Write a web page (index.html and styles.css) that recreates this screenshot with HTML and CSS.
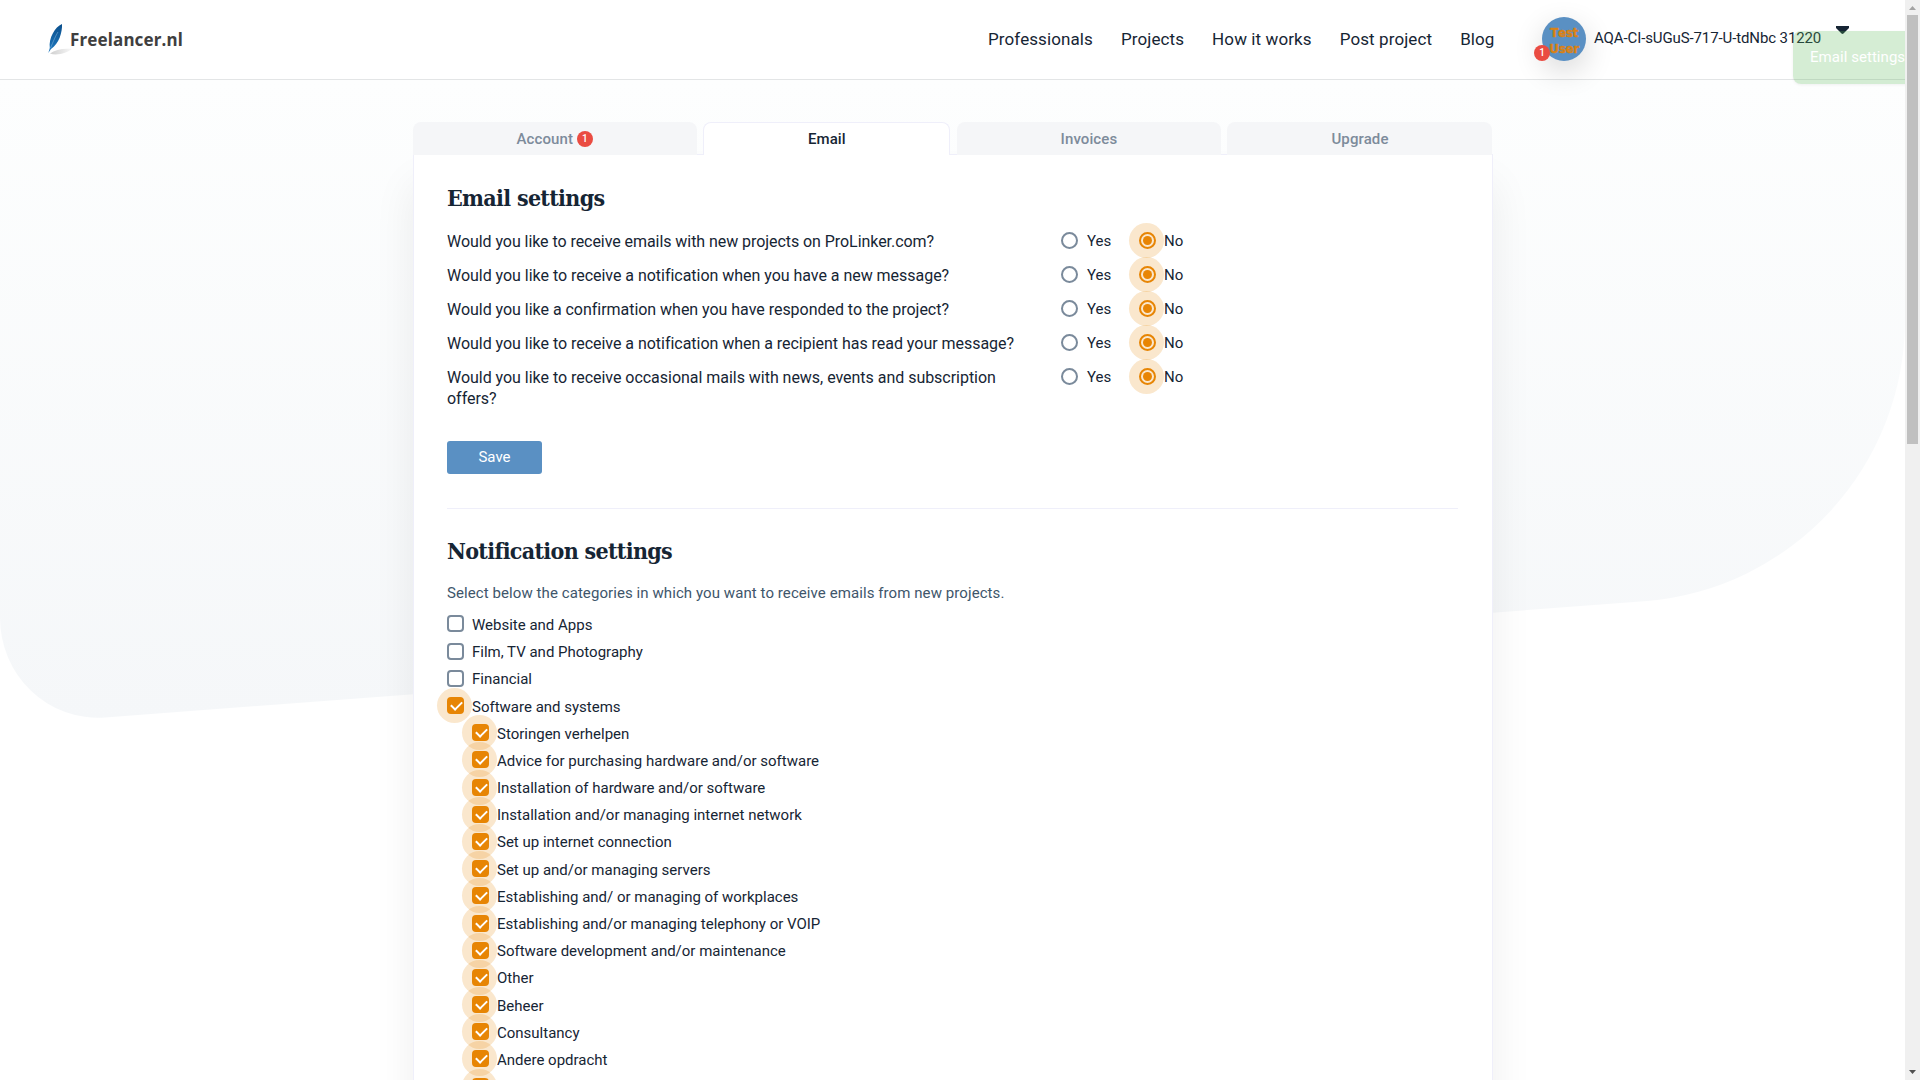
FILE: index.html
```html
<!DOCTYPE html>
<html lang="en">
<head>
<meta charset="utf-8">
<title>Email settings - Freelancer.nl</title>
<link rel="stylesheet" href="styles.css">
</head>
<body>
<div class="window">
  <div class="page">
    <svg class="backdrop" viewBox="0 0 1905 1080" width="1905" height="1080" aria-hidden="true">
      <defs>
        <linearGradient id="fade" x1="0" y1="0" x2="0" y2="1">
          <stop offset="0" stop-color="#fdfefe"/>
          <stop offset="1" stop-color="#f5f7f9"/>
        </linearGradient>
      </defs>
      <path fill="url(#fade)" d="M0 80H1905V320A282 282 0 0 1 1647 601L105 717.500A98 100 0 0 1 0 617Z"/>
    </svg>
    <header class="header">
      <a class="logo">
        <svg width="26" height="34" viewBox="0 0 26 34" aria-hidden="true">
          <defs>
            <linearGradient id="quill" x1="0" y1="0" x2="0" y2="1"><stop offset="0" stop-color="#0a4f8c"/><stop offset="1" stop-color="#1f7ac0"/></linearGradient>
            <linearGradient id="shade" x1="0" y1="0" x2="1" y2="0"><stop offset="0" stop-color="#cfcfcf"/><stop offset="1" stop-color="#f8f8f8"/></linearGradient>
          </defs>
          <path fill="url(#shade)" d="M2 30.500C7 27 15 25 24 26C19 30 9 33 2 30.500Z"/>
          <path fill="url(#quill)" d="M14 1C7 4 .500 15 1.800 25L.300 30L3 26C11 21 14.500 9 14 1Z"/>
          <path fill="none" stroke="#8fbbe0" stroke-width=".5" d="M2.500 25C5 19 8 12 10 9"/>
        </svg>
        <span class="logo-text">Freelancer.nl</span>
      </a>
      <nav class="nav">
        <a>Professionals</a><a>Projects</a><a>How it works</a><a>Post project</a><a>Blog</a>
      </nav>
      <div class="user">
        <div class="avatar"><span>Test</span><span>User</span><b class="badge avatar-badge">1</b></div>
        <span class="user-name">AQA-CI-sUGuS-717-U-tdNbc 31220</span>
        <svg class="caret" width="13" height="8" viewBox="0 0 13 8" aria-hidden="true"><path d="M0 0H13V2L7.500 7.500Q6.500 8.400 5.500 7.500L0 2Z" fill="#162534"/></svg>
      </div>
    </header>
    <main class="main">
      <div class="tabs">
        <a class="tab">Account <b class="badge">1</b></a>
        <a class="tab tab-active">Email</a>
        <a class="tab">Invoices</a>
        <a class="tab">Upgrade</a>
      </div>
      <div class="card">
        <section class="email">
          <h2 class="title title-email">Email settings</h2>
          <div class="questions">
            <div class="question"><p>Would you like to receive emails with new projects on ProLinker.com?</p><label class="opt"><i class="radio"></i>Yes</label><label class="opt"><i class="radio on"></i>No</label></div>
            <div class="question"><p>Would you like to receive a notification when you have a new message?</p><label class="opt"><i class="radio"></i>Yes</label><label class="opt"><i class="radio on"></i>No</label></div>
            <div class="question"><p>Would you like a confirmation when you have responded to the project?</p><label class="opt"><i class="radio"></i>Yes</label><label class="opt"><i class="radio on"></i>No</label></div>
            <div class="question"><p>Would you like to receive a notification when a recipient has read your message?</p><label class="opt"><i class="radio"></i>Yes</label><label class="opt"><i class="radio on"></i>No</label></div>
            <div class="question"><p>Would you like to receive occasional mails with news, events and subscription offers?</p><label class="opt"><i class="radio"></i>Yes</label><label class="opt"><i class="radio on"></i>No</label></div>
          </div>
          <button class="save">Save</button>
        </section>
        <section class="notify">
          <h2 class="title title-notify">Notification settings</h2>
          <p class="hint">Select below the categories in which you want to receive emails from new projects.</p>
          <div class="list">
            <label class="item"><i class="check"></i><span>Website and Apps</span></label>
            <label class="item"><i class="check"></i><span>Film, TV and Photography</span></label>
            <label class="item"><i class="check"></i><span>Financial</span></label>
            <label class="item"><i class="check on"></i><span>Software and systems</span></label>
            <div class="list sublist">
              <label class="item"><i class="check on"></i><span>Storingen verhelpen</span></label>
              <label class="item"><i class="check on"></i><span>Advice for purchasing hardware and/or software</span></label>
              <label class="item"><i class="check on"></i><span>Installation of hardware and/or software</span></label>
              <label class="item"><i class="check on"></i><span>Installation and/or managing internet network</span></label>
              <label class="item"><i class="check on"></i><span>Set up internet connection</span></label>
              <label class="item"><i class="check on"></i><span>Set up and/or managing servers</span></label>
              <label class="item"><i class="check on"></i><span>Establishing and/ or managing of workplaces</span></label>
              <label class="item"><i class="check on"></i><span>Establishing and/or managing telephony or VOIP</span></label>
              <label class="item"><i class="check on"></i><span>Software development and/or maintenance</span></label>
              <label class="item"><i class="check on"></i><span>Other</span></label>
              <label class="item"><i class="check on"></i><span>Beheer</span></label>
              <label class="item"><i class="check on"></i><span>Consultancy</span></label>
              <label class="item"><i class="check on"></i><span>Andere opdracht</span></label>
              <label class="item"><i class="check on"></i></label>
            </div>
          </div>
        </section>
      </div>
    </main>
    <div class="toast">Email settings</div>
  </div>
  <div class="scrollbar"><i class="arrow arrow-up"></i><i class="thumb"></i><i class="arrow arrow-down"></i></div>
</div>
</body>
</html>
```
FILE: styles.css
```css
* { box-sizing: border-box; }

body {
  margin: 0;
  background: #fff;
  color: #162534;
  font-family: Roboto, "Liberation Sans", sans-serif;
  font-size: 15px;
  overflow: hidden;
}

h2, p { margin: 0; }

.window {
  display: grid;
  grid-template-columns: 1fr 15px;
  height: 1080px;
  overflow: hidden;
}

.page {
  position: relative;
  overflow: hidden;
}

.backdrop {
  position: absolute;
  inset: 0;
  z-index: -1;
}

/* Header */
.header {
  display: flex;
  align-items: flex-start;
  height: 80px;
  padding-left: 48px;
  background: #fff;
  border-bottom: 1px solid #e3e5e6;
}

.logo {
  display: flex;
  width: 940px;
  padding-top: 23px;
}

.logo-text {
  margin-left: -4px;
  padding-top: 6px;
  color: #3f3f3f;
  font: 700 17px/22px "Noto Sans", "Open Sans", sans-serif;
  font-kerning: none;
  letter-spacing: .15px;
}

.nav {
  display: flex;
  gap: 28px;
  width: 554px;
  padding-top: 29px;
  font-size: 17px;
  line-height: 20px;
  letter-spacing: .1px;
  white-space: nowrap;
}

.user {
  display: flex;
  align-items: flex-start;
  padding-top: 17px;
  white-space: nowrap;
}

.avatar {
  position: relative;
  display: flex;
  flex-direction: column;
  align-items: center;
  width: 44px;
  height: 44px;
  padding-top: 8px;
  border-radius: 50%;
  background: #5a90c3;
  box-shadow: 0 10px 30px rgba(0, 0, 0, .16);
  color: #d98215;
  font: 700 12px/16px "DejaVu Sans", sans-serif;
  font-kerning: none;
  letter-spacing: -.4px;
  -webkit-text-stroke: .4px #d98215;
}

.badge {
  display: inline-flex;
  align-items: center;
  justify-content: center;
  width: 16px;
  height: 16px;
  border-radius: 50%;
  background: #ea4c42;
  color: #fff;
  font: 500 10px/16px Roboto, sans-serif;
  -webkit-text-stroke: 0;
}

.avatar-badge {
  position: absolute;
  left: -8px;
  top: 28px;
}

.user-name {
  margin-left: 8px;
  padding-top: 12px;
  line-height: 18px;
  letter-spacing: -.11px;
}

.caret {
  margin: 9px 0 0 15px;
}

/* Tabs and card */
.main {
  width: 1080px;
  margin: 42px auto 0;
}

.tabs {
  position: relative;
  display: grid;
  grid-template-columns: 284.500px 247px 264.500px 265px;
  column-gap: 6.330px;
  height: 33px;
}

.tab {
  display: flex;
  align-items: center;
  justify-content: center;
  gap: 4px;
  padding-top: 1px;
  border-radius: 8px 8px 0 0;
  background: #f5f6f8;
  color: #7d8b9b;
  font-weight: 500;
  letter-spacing: .1px;
}

.tab-active {
  border: 1px solid #efeffa;
  border-bottom: 0;
  padding-top: 0;
  background: #fff;
  color: #162534;
}

.card {
  height: 1200px;
  margin-top: -1px;
  padding: 0 33.500px;
  border: 1px solid #efeffa;
  background: #fff;
  box-shadow: 0 30px 40px rgba(0, 0, 0, .07);
}

.title {
  font: 700 23px/32px "DejaVu Serif Condensed", "DejaVu Serif", serif;
  font-stretch: condensed;
  letter-spacing: -.68px;
  white-space: nowrap;
}

.email {
  height: 354px;
  padding-top: 27px;
  border-bottom: 1px solid #efeffa;
}

.questions {
  display: flex;
  flex-direction: column;
  gap: 13px;
  padding-top: 17px;
}

.question {
  display: grid;
  grid-template-columns: 614px 78px 100px;
  font-size: 16px;
  line-height: 21px;
}

.question p {
  width: 580px;
  letter-spacing: -.03px;
}

.question:first-child p { letter-spacing: -.06px; }

.opt {
  display: flex;
  align-items: flex-start;
  gap: 9px;
  height: 21px;
  padding-top: 1px;
  font-size: 15px;
  line-height: 19px;
}

.opt + .opt { gap: 8px; }

.radio,
.check {
  position: relative;
  flex: none;
  width: 17px;
  height: 17px;
  border: 2px solid #7a8a9b;
  border-radius: 50%;
}

.check { border-radius: 4px; }

.radio.on,
.check.on { border-color: #e88504; }

.check.on { background: #e88504; }

.radio.on::after {
  content: "";
  position: absolute;
  inset: 2px;
  border-radius: 50%;
  background: #e88504;
}

.radio.on::before,
.check.on::before {
  content: "";
  position: absolute;
  left: -12px;
  top: -11px;
  width: 35px;
  height: 35px;
  border-radius: 50%;
  background: rgba(232, 133, 4, .2);
  z-index: 0;
}

.check.on::after {
  content: "";
  position: absolute;
  left: 2px;
  top: 2px;
  width: 9px;
  height: 5px;
  border: solid #fff;
  border-width: 0 0 2px 2px;
  transform: rotate(-45deg);
}

.save {
  display: block;
  width: 95px;
  height: 33px;
  margin-top: 32px;
  padding: 0 0 2px;
  border: 0;
  border-radius: 3px;
  background: #5a90c3;
  color: #fff;
  font: 400 15px/20px Roboto, sans-serif;
}

.notify { padding-top: 26px; }

.hint {
  padding-top: 16px;
  color: #40566b;
  line-height: 20px;
  letter-spacing: .08px;
}

.list { padding-top: 7.400px; }

.sublist { padding: 0 0 0 25px; }

.item {
  display: flex;
  align-items: center;
  gap: 8px;
  height: 27.200px;
}

.item span {
  position: relative;
  padding-top: 2px;
}

/* Overlay notice sliding in from the right */
.toast {
  position: absolute;
  left: 1793px;
  top: 31px;
  width: 200px;
  height: 53px;
  padding: 16px 17px;
  border-radius: 8px;
  background: rgba(86, 184, 84, .25);
  box-shadow: 0 1px 3px rgba(0, 0, 0, .06);
  color: #fff;
  line-height: 20px;
  letter-spacing: .05px;
}

/* Window scrollbar */
.scrollbar {
  display: flex;
  flex-direction: column;
  align-items: center;
  background: #f0f0f0;
}

.thumb {
  width: 11px;
  height: 429px;
  margin-top: 5px;
  background: #c0c0c0;
}

.arrow {
  width: 7px;
  height: 4px;
  background: #a3a3a3;
  clip-path: polygon(50% 0, 100% 100%, 0 100%);
}

.arrow-up { margin-top: 6px; }

.arrow-down {
  margin: auto 0 6px;
  background: #505050;
  clip-path: polygon(0 0, 100% 0, 50% 100%);
}
```
